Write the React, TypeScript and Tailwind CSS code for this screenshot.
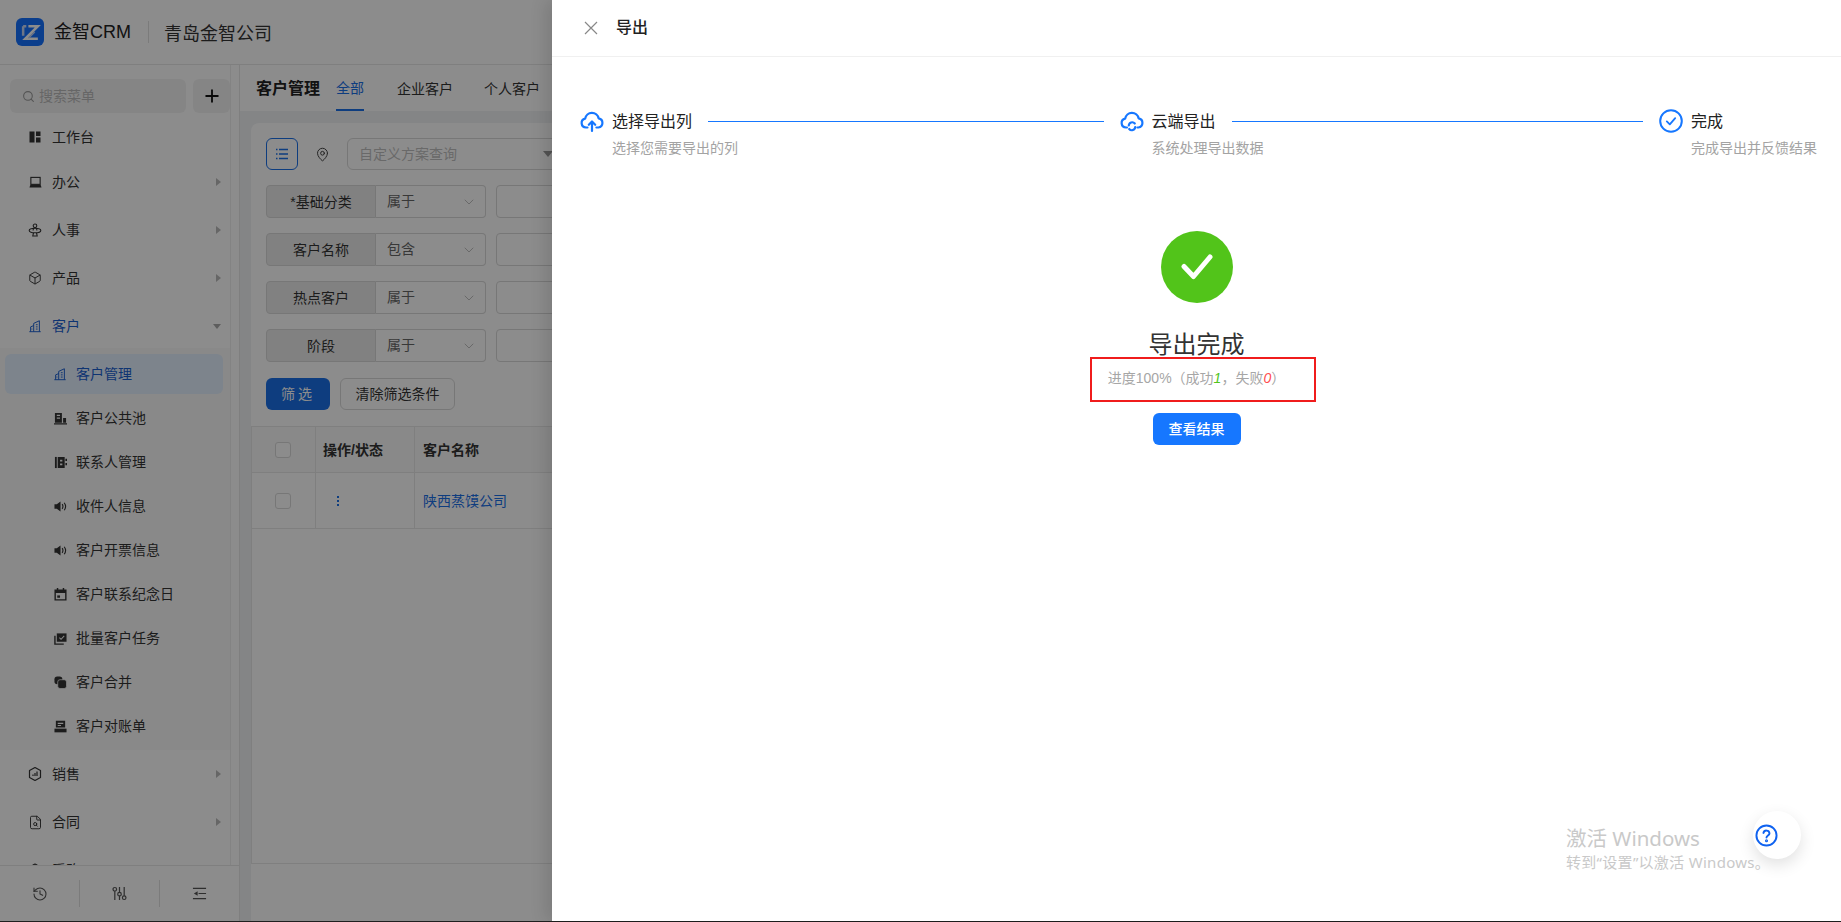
import { Box, ChevronDown, FileSearch, History, MapPin, Plus, Search } from 'lucide-react';
import type { ReactNode } from 'react';

type IconProps = { className?: string };

function BuildingIcon({ className }: IconProps) {
  return (
    <svg viewBox="0 0 16 16" className={className} fill="none" stroke="currentColor" strokeWidth="1.1">
      <path d="M1.5 14.5h13M3 14.5V9l3.5-1.5M6.5 14.5V5L13 2v12.5" />
      <path d="M9 6.5h2M9 9h2M9 11.5h2M4 11.5h1" />
    </svg>
  );
}

function PoolIcon({ className }: IconProps) {
  return (
    <svg viewBox="0 0 14 14" className={className} fill="currentColor">
      <path fillRule="evenodd" d="M1 1h7.5v10.5H1zM3 3v1.3h3.5V3zM3 6v1.3h3.5V6z" />
      <path d="M9.8 6.5H13v5H9.8zM0 12h14v1.4H0z" />
    </svg>
  );
}

function ContactIcon({ className }: IconProps) {
  return (
    <svg viewBox="0 0 14 14" className={className} fill="currentColor">
      <path d="M1 1h2v12H1z" />
      <path fillRule="evenodd" d="M4 1h7.5v12H4zM6.5 4v2H9V4zM6.5 8v2H9V8z" />
      <path d="M12.3 3H14v2.5h-1.7zM12.3 7.5H14V10h-1.7z" />
    </svg>
  );
}

function SpeakerIcon({ className }: IconProps) {
  return (
    <svg viewBox="0 0 14 14" className={className}>
      <path d="M0.5 4.5h2.5L7 1.5v11l-4-3H0.5z" fill="currentColor" />
      <path d="M8.8 4.5c1 1.5 1 3.5 0 5M11 3c1.8 2.4 1.8 5.6 0 8" fill="none" stroke="currentColor" strokeWidth="1.2" />
    </svg>
  );
}

function CalendarIcon({ className }: IconProps) {
  return (
    <svg viewBox="0 0 14 14" className={className} fill="currentColor">
      <path fillRule="evenodd" d="M3 0h1.6v1.5h4.8V0H11v1.5h2.5V13.5H.5V1.5H3zM2 5.5v6.5h10V5.5z" />
      <path d="M3.5 8h3v2.5h-3z" />
    </svg>
  );
}

function TaskIcon({ className }: IconProps) {
  return (
    <svg viewBox="0 0 14 14" className={className}>
      <path d="M1 4v9h9.5" fill="none" stroke="currentColor" strokeWidth="1.5" />
      <path d="M3 1.5h10.5v9H3z" fill="currentColor" />
      <path d="M5.8 6l1.8 1.8L11 4.2" fill="none" stroke="#fafafa" strokeWidth="1.1" />
    </svg>
  );
}

function MergeIcon({ className }: IconProps) {
  return (
    <svg viewBox="0 0 14 14" className={className} fill="currentColor">
      <rect x="0.5" y="0.5" width="8.5" height="8.5" rx="3" />
      <rect x="4" y="4" width="9.5" height="9.5" rx="2.5" stroke="#fafafa" strokeWidth="0.8" />
    </svg>
  );
}

function BillIcon({ className }: IconProps) {
  return (
    <svg viewBox="0 0 14 14" className={className} fill="currentColor">
      <path fillRule="evenodd" d="M2 .8h10v7.4H2zM4 3v1.2h6V3zM4 5.3v1.2h3.5V5.3z" />
      <path d="M.5 9.3h13v4H.5z" />
    </svg>
  );
}

function WorkbenchIcon({ className }: IconProps) {
  return (
    <svg viewBox="0 0 12 12" className={className} fill="currentColor">
      <path d="M.5.5h5v11h-5zM7 .5h4.5v4.5H7zM7 6.5h4.5v5H7z" />
    </svg>
  );
}

function OfficeIcon({ className }: IconProps) {
  return (
    <svg viewBox="0 0 14 14" className={className}>
      <rect x="2" y="1.5" width="10" height="7.5" fill="none" stroke="currentColor" strokeWidth="1.2" />
      <path d="M1.5 9.5h11l1 3h-13z" fill="currentColor" />
    </svg>
  );
}

function PersonIcon({ className }: IconProps) {
  return (
    <svg viewBox="0 0 14 14" className={className} fill="none" stroke="currentColor" strokeWidth="1.1">
      <circle cx="7" cy="2.8" r="1.8" />
      <ellipse cx="7" cy="7.5" rx="5.8" ry="2.3" />
      <path d="M5.5 9.8L4.8 13h4.4l-.7-3.2M5.500 5l-.4 2.500M8.500 5l.4 2.500" />
    </svg>
  );
}

function SalesIcon({ className }: IconProps) {
  return (
    <svg viewBox="0 0 16 16" className={className} fill="none" stroke="currentColor" strokeWidth="1.2">
      <path d="M8 1.5l5.5 3v7L8 14.5l-5.5-3v-7z" strokeLinejoin="round" />
      <path d="M6 10V8.5M8 10V7M10 10V5.5" />
    </svg>
  );
}

function SlidersIcon({ className }: IconProps) {
  return (
    <svg viewBox="0 0 16 16" className={className} fill="none" stroke="currentColor" strokeWidth="1.3">
      <path d="M3 5.5V15M8 1v6M8 10.500V15M13 1v9.500" />
      <circle cx="3" cy="3.5" r="1.9" />
      <circle cx="8" cy="8.7" r="1.9" />
      <circle cx="13" cy="12.5" r="1.9" />
    </svg>
  );
}

function CollapseIcon({ className }: IconProps) {
  return (
    <svg viewBox="0 0 16 16" className={className}>
      <path d="M1 2.5h14M1 13.5h14M7 8h8" fill="none" stroke="currentColor" strokeWidth="1.3" />
      <path d="M2 8l4-2.5v5z" fill="currentColor" />
    </svg>
  );
}

const SUB_ITEMS: { label: string; icon: ReactNode }[] = [
  { label: '客户公共池', icon: <PoolIcon className="w-[13px] h-[13px]" /> },
  { label: '联系人管理', icon: <ContactIcon className="w-[13px] h-[13px]" /> },
  { label: '收件人信息', icon: <SpeakerIcon className="w-[13px] h-[13px]" /> },
  { label: '客户开票信息', icon: <SpeakerIcon className="w-[13px] h-[13px]" /> },
  { label: '客户联系纪念日', icon: <CalendarIcon className="w-[13px] h-[13px]" /> },
  { label: '批量客户任务', icon: <TaskIcon className="w-[13px] h-[13px]" /> },
  { label: '客户合并', icon: <MergeIcon className="w-[13px] h-[13px]" /> },
  { label: '客户对账单', icon: <BillIcon className="w-[13px] h-[13px]" /> },
];

const FILTERS = [
  { label: '*基础分类', op: '属于' },
  { label: '客户名称', op: '包含' },
  { label: '热点客户', op: '属于' },
  { label: '阶段', op: '属于' },
];

function MenuRow({ label, icon, arrow = true }: { label: string; icon: ReactNode; arrow?: boolean }) {
  return (
    <div className="h-11 flex items-center pl-[27px] pr-[9px] text-sm text-[#333]">
      <span className="w-4 h-4 flex items-center justify-center text-[#333]">{icon}</span>
      <span className="ml-[9px]">{label}</span>
      {arrow && <span className="ml-auto w-0 h-0 border-y-[4px] border-y-transparent border-l-[5px] border-l-[#bbb]" />}
    </div>
  );
}

function Sidebar() {
  return (
    <aside className="w-[240px] shrink-0 bg-white border-r border-[#e8e8e8] flex flex-col">
      <div className="flex-1 min-h-0 flex flex-col w-[231px] border-r border-[#efefef] overflow-hidden">
        <div className="flex gap-[7px] pt-[14px] pl-[10px] w-[240px]">
          <div className="w-[176px] h-[34px] rounded-md bg-[#f3f3f3] flex items-center pl-3 gap-1 text-sm text-[#bbb]">
            <Search className="w-[13px] h-[13px] text-[#999]" />
            搜索菜单
          </div>
          <div className="w-[37px] h-[34px] rounded-md bg-[#f3f3f3] flex items-center justify-center text-[#111]">
            <Plus className="w-5 h-5" strokeWidth={2.2} />
          </div>
        </div>
        <nav className="mt-[2px] flex flex-col">
          <MenuRow label="工作台" icon={<WorkbenchIcon className="w-3 h-3" />} arrow={false} />
          <div className="mt-px" />
          <MenuRow label="办公" icon={<OfficeIcon className="w-[13px] h-[13px]" />} />
          <div className="mt-1" />
          <MenuRow label="人事" icon={<PersonIcon className="w-[14px] h-[14px]" />} />
          <div className="mt-1" />
          <MenuRow label="产品" icon={<Box className="w-[14px] h-[14px]" strokeWidth={1.6} />} />
          <div className="mt-1" />
          <div className="h-11 flex items-center pl-[27px] pr-[9px] text-sm text-[#1a5fd0]">
            <span className="w-4 flex justify-center">
              <BuildingIcon className="w-[14px] h-[14px]" />
            </span>
            <span className="ml-[9px]">客户</span>
            <span className="ml-auto w-0 h-0 border-x-[4px] border-x-transparent border-t-[5px] border-t-[#aaa]" />
          </div>
          <div className="bg-[#fafafa] flex flex-col gap-1 pt-[6px] pb-1 pr-[3px]">
            <div className="h-10 ml-[5px] w-[218px] rounded-md bg-[#e3f0ff] flex items-center pl-[48px] text-sm text-[#1a5fd0]">
              <BuildingIcon className="w-[14px] h-[14px]" />
              <span className="ml-[9px]">客户管理</span>
            </div>
            {SUB_ITEMS.map((s) => (
              <div key={s.label} className="h-10 flex items-center pl-[53px] text-sm text-[#333]">
                <span className="w-[14px] flex justify-center">{s.icon}</span>
                <span className="ml-[9px]">{s.label}</span>
              </div>
            ))}
          </div>
          <div className="mt-[2px]" />
          <MenuRow label="销售" icon={<SalesIcon className="w-4 h-4" />} />
          <div className="mt-1" />
          <MenuRow label="合同" icon={<FileSearch className="w-[15px] h-[15px]" strokeWidth={1.5} />} />
          <div className="mt-1" />
          <MenuRow label="采购" icon={<Box className="w-[14px] h-[14px]" />} />
        </nav>
      </div>
      <div className="h-[56px] shrink-0 border-t border-[#e8e8e8] grid grid-cols-[79px_80px_80px] text-[#555]">
        <div className="flex items-center justify-center">
          <History className="w-4 h-4" strokeWidth={1.6} />
        </div>
        <div className="flex items-center justify-center my-[14px] border-l border-[#e0e0e0]">
          <SlidersIcon className="w-[15px] h-[15px]" />
        </div>
        <div className="flex items-center justify-center my-[14px] border-l border-[#e0e0e0]">
          <CollapseIcon className="w-[15px] h-[15px]" />
        </div>
      </div>
    </aside>
  );
}

function Card() {
  return (
    <div className="flex-1 min-h-0 mt-3 ml-[11px] bg-white rounded-tl-lg flex flex-col">
      <div className="px-[15px] pt-[15px]">
        <div className="flex items-center h-8">
          <div className="w-8 h-8 rounded-md border border-[#1a6fe8] text-[#1a6fe8] flex items-center justify-center">
            <svg viewBox="0 0 16 16" className="w-4 h-4" fill="none" stroke="currentColor" strokeWidth="1.5">
              <path d="M5 3.5h9M5 8h9M5 12.5h9M2 3.5h1.5M2 8h1.5M2 12.5h1.5" />
            </svg>
          </div>
          <MapPin className="w-[15px] h-[15px] ml-[17px] text-[#444]" strokeWidth={1.6} />
          <div className="ml-[17px] w-[214px] h-8 rounded-md border border-[#d9d9d9] flex items-center pl-[11px] pr-[7px] text-sm text-[#bfbfbf]">
            自定义方案查询
            <span className="ml-auto w-0 h-0 border-x-[5px] border-x-transparent border-t-[6px] border-t-[#999]" />
          </div>
        </div>
        <div className="mt-[15px] flex flex-col gap-[15px]">
          {FILTERS.map((f) => (
            <div key={f.label} className="flex h-[33px] text-sm">
              <div className="w-[110px] rounded-l-sm border border-[#d9d9d9] bg-[#ececec] flex items-center justify-center text-[#333]">
                {f.label}
              </div>
              <div className="w-[110px] rounded-r-sm border border-l-0 border-[#d9d9d9] flex items-center pl-[11px] pr-2 text-[#666]">
                <span className="-mt-[2px]">{f.op}</span>
                <ChevronDown className="ml-auto w-4 h-4 text-[#bbb]" strokeWidth={1.4} />
              </div>
              <div className="ml-[10px] w-[120px] rounded-sm border border-[#d9d9d9]" />
            </div>
          ))}
        </div>
        <div className="mt-4 flex gap-[10px] h-8 text-sm">
          <div className="w-[64px] rounded-md bg-[#1a6fe8] text-white flex items-center justify-center tracking-[3px]">筛选</div>
          <div className="w-[115px] rounded-md border border-[#d9d9d9] text-[#333] flex items-center justify-center">清除筛选条件</div>
        </div>
      </div>
      <div className="mt-4 flex-1 flex flex-col border-l border-b border-[#e8e8e8] text-sm">
        <div className="flex h-[47px] bg-[#fafafa] border-y border-[#e8e8e8] font-semibold text-[#333]">
          <div className="w-[64px] flex items-center pl-[23px] border-r border-[#e8e8e8]">
            <span className="w-4 h-4 rounded-[3px] border border-[#d9d9d9] bg-white" />
          </div>
          <div className="w-[99px] flex items-center pl-[7px] border-r border-[#e8e8e8]">操作/状态</div>
          <div className="flex-1 flex items-center pl-2">客户名称</div>
        </div>
        <div className="flex h-[56px] border-b border-[#e8e8e8]">
          <div className="w-[64px] flex items-center pl-[23px] border-r border-[#e8e8e8]">
            <span className="w-4 h-4 rounded-[3px] border border-[#d9d9d9] bg-white" />
          </div>
          <div className="w-[99px] flex items-center pl-[21px] border-r border-[#e8e8e8] text-[#1a6fe8]">
            <span className="flex flex-col gap-[2px]">
              <i className="w-[2px] h-[2px] bg-current" />
              <i className="w-[2px] h-[2px] bg-current" />
              <i className="w-[2px] h-[2px] bg-current" />
            </span>
          </div>
          <div className="flex-1 flex items-center pl-2 text-[#1a6fe8]">陕西蒸馍公司</div>
        </div>
      </div>
      <div className="h-[57px] shrink-0" />
    </div>
  );
}

function Page() {
  return (
    <div className="h-[921px] flex flex-col bg-white">
      <header className="h-[65px] shrink-0 border-b border-[#e8e8e8] flex items-center pl-4 shadow-sm">
        <div className="w-[28px] h-[28px] rounded-md bg-[#1471ff] flex items-center justify-center">
          <svg viewBox="0 0 20 20" className="w-[21px] h-[21px]" fill="none" strokeWidth="2.4">
            <path d="M3 4h3M3 4v9" stroke="#c9d8f5" />
            <path d="M8 4h9L5 16h12" stroke="#ffffff" />
            <path d="M14 9.5l-6 6" stroke="#c9d8f5" strokeWidth="1.4" />
          </svg>
        </div>
        <span className="ml-[10px] text-lg text-[#222]">金智CRM</span>
        <span className="ml-[17px] w-px h-[22px] bg-[#e0e0e0]" />
        <span className="ml-[15px] text-lg text-[#333] mt-[4px]">青岛金智公司</span>
      </header>
      <div className="flex-1 min-h-0 flex items-stretch">
        <Sidebar />
        <main className="flex-1 min-w-0 bg-[#f0f2f5] flex flex-col">
          <div className="h-[46px] shrink-0 bg-white flex items-center pl-4 text-sm text-[#333]">
            <span className="mt-[2px] text-base font-semibold text-[#222]">客户管理</span>
            <span className="ml-4 h-full pt-[2px] flex items-center border-b-2 border-[#1a6fe8] text-[#1a6fe8]">全部</span>
            <span className="mt-[2px] ml-[33px]">企业客户</span>
            <span className="mt-[2px] ml-[31px]">个人客户</span>
          </div>
          <Card />
        </main>
      </div>
    </div>
  );
}

function StepTitle({ title, desc, icon, line = true }: { title: string; desc: string; icon: ReactNode; line?: boolean }) {
  return (
    <div className={line ? 'flex-1 flex min-w-0' : 'w-[157px] shrink-0 flex'}>
      <div className="w-6 h-6 shrink-0 text-[#1677ff]">{icon}</div>
      <div className="ml-2 flex-1 min-w-0">
        <div className="h-6 flex items-center text-base text-[#222]">
          <span className="shrink-0 pt-[2px]">{title}</span>
          {line && <span className="flex-1 h-px ml-4 mr-4 bg-[#1677ff]" />}
        </div>
        <div className="mt-[4px] h-[22px] leading-[22px] text-sm text-[#a3a3a3] whitespace-nowrap">{desc}</div>
      </div>
    </div>
  );
}

function Drawer() {
  return (
    <div className="absolute top-0 right-0 bottom-px w-[1289px] bg-white shadow-[-6px_0_16px_0_rgba(0,0,0,0.12)] flex flex-col">
      <div className="h-[57px] shrink-0 border-b border-[#f0f0f0] flex items-center pl-8">
        <svg viewBox="0 0 14 14" className="w-[14px] h-[14px] text-[#888]" fill="none" stroke="currentColor" strokeWidth="1.2">
          <path d="M1 1l12 12M13 1L1 13" />
        </svg>
        <span className="ml-[18px] text-base font-medium text-[#222]">导出</span>
      </div>
      <div className="flex pt-[52px] pl-7 pr-[25px]">
        <StepTitle
          title="选择导出列"
          desc="选择您需要导出的列"
          icon={
            <svg viewBox="0 0 24 24" className="w-6 h-6" fill="none" stroke="currentColor" strokeWidth="2.2" strokeLinecap="round" strokeLinejoin="round">
              <path d="M7.5 18.5H6a4.5 4.5 0 0 1-.8-8.9 6.8 6.8 0 0 1 13.4-.2 4.6 4.6 0 0 1-.2 9.1h-2" />
              <path d="M12 22v-9M8.8 15.8L12 12.5l3.2 3.3" />
            </svg>
          }
        />
        <StepTitle
          title="云端导出"
          desc="系统处理导出数据"
          icon={
            <svg viewBox="0 0 24 24" className="w-6 h-6" fill="none" stroke="currentColor" strokeWidth="2.2" strokeLinecap="round" strokeLinejoin="round">
              <path d="M7 18.5H6a4.5 4.5 0 0 1-.8-8.9 6.8 6.8 0 0 1 13.4-.2 4.6 4.6 0 0 1-.2 9.1h-1" />
              <path d="M8.8 16.5a3.4 3.4 0 0 1 6-2M15.2 18a3.4 3.4 0 0 1-6 2" />
            </svg>
          }
        />
        <StepTitle
          title="完成"
          desc="完成导出并反馈结果"
          line={false}
          icon={
            <svg viewBox="0 0 24 24" className="w-6 h-6" fill="none" stroke="currentColor" strokeLinecap="round" strokeLinejoin="round">
              <circle cx="12" cy="12" r="10.8" strokeWidth="2" />
              <path d="M7.8 12.4l3 3 5.4-6.2" strokeWidth="1.8" />
            </svg>
          }
        />
      </div>
      <div className="mt-[72px] flex flex-col items-center">
        <div className="w-[72px] h-[72px] rounded-full bg-[#52c41a] flex items-center justify-center">
          <svg viewBox="0 0 32 32" className="w-8 h-8" fill="none" stroke="white" strokeWidth="5" strokeLinecap="round" strokeLinejoin="round">
            <path d="M3 15.5l9.5 10L29 6" />
          </svg>
        </div>
        <div className="mt-[26px] h-8 leading-8 text-2xl text-[#333]">导出完成</div>
        <div className="mt-[6px] h-[22px] leading-[22px] text-sm text-[#a6a6a6]">
          进度100%（成功<i className="text-[#52c41a]">1</i>，失败<i className="text-[#ff4d4f]">0</i>）
        </div>
        <div className="mt-6 w-[88px] h-8 rounded-md bg-[#1677ff] text-white text-sm font-medium flex items-center justify-center">
          查看结果
        </div>
      </div>
      {/* 红框是截图上的标注 */}
      <div className="absolute left-[538px] top-[357px] w-[226px] h-[45px] border-2 border-[#f01c1c]" />
    </div>
  );
}

export default function App() {
  return (
    <div className="relative w-[1841px] h-[922px] overflow-hidden bg-[#1f1f1f] font-['Liberation_Sans','Noto_Sans_CJK_SC',sans-serif]">
      <Page />
      <div className="absolute inset-x-0 top-0 bottom-px bg-black/45" />
      <Drawer />
      <div className="absolute left-[1566px] top-[825px] text-[#c9c9c9] font-['Noto_Sans','Noto_Sans_CJK_SC',sans-serif]">
        <div className="text-[20.5px] leading-[27px]">激活 Windows</div>
        <div className="text-[15px] leading-5 tracking-[0.3px]">转到“设置”以激活 Windows。</div>
      </div>
      <div className="absolute left-[1753px] top-[811px] w-12 h-12 rounded-full bg-white shadow-[0_6px_16px_rgba(0,0,0,0.12)] flex items-center pl-[2px]">
        <svg viewBox="0 0 24 24" className="w-[23px] h-[23px] text-[#0f62f0]" fill="none" stroke="currentColor" strokeWidth="2" strokeLinecap="round">
          <circle cx="12" cy="12" r="10.5" />
          <path d="M8.8 9.3a3.2 3.2 0 0 1 6.3.6c0 2-3.1 2.4-3.1 4.3" />
          <circle cx="12" cy="17.5" r="0.6" />
        </svg>
      </div>
    </div>
  );
}
